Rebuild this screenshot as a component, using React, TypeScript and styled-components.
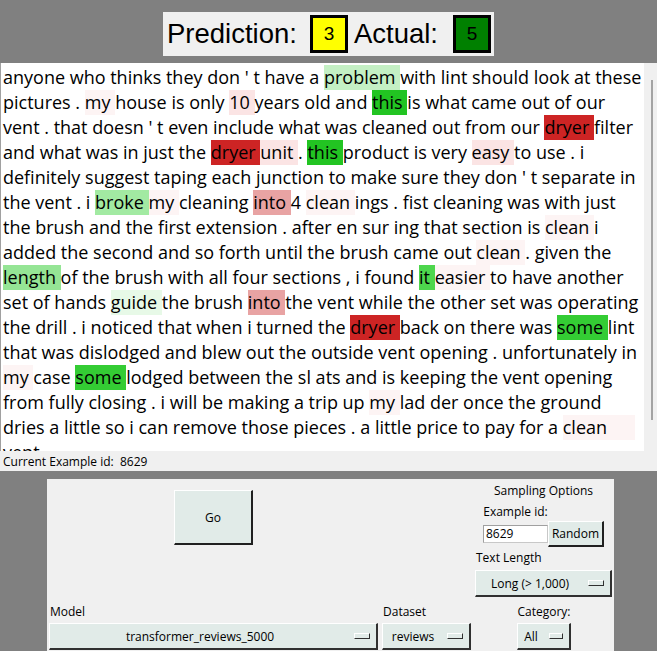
import React from "react";
import styled, { createGlobalStyle } from "styled-components";

const Global = createGlobalStyle`
  html, body { margin: 0; padding: 0; background: #808080; }
  body { width: 657px; height: 651px; overflow: hidden; }
  #root { width: 657px; }
`;

const Window = styled.div`
  display: flex;
  flex-direction: column;
  width: 657px;
  height: 651px;
  background: #808080;
  overflow: hidden;
`;

const HeaderBar = styled.div`
  height: 63px;
  display: flex;
  justify-content: center;
  align-items: flex-start;
  padding-top: 12px;
  box-sizing: border-box;
`;

const HeaderBox = styled.div`
  height: 44px;
  display: flex;
  align-items: center;
  background: #f0f0f0;
  padding: 0 3px 0 4px;
  font-family: "Liberation Sans", Arial, sans-serif;
  font-size: 27.5px;
  color: #000;
`;

const HeaderLabel = styled.span<{ $gap: number }>`
  margin-right: ${(p) => p.$gap}px;
  white-space: pre;
`;

const ScoreBox = styled.div<{ $bg: string; $mr: number }>`
  width: 38px;
  height: 38px;
  box-sizing: border-box;
  border: 3px solid #000;
  background: ${(p) => p.$bg};
  display: flex;
  align-items: center;
  justify-content: center;
  font-size: 19px;
  margin-right: ${(p) => p.$mr}px;
`;

const TextRow = styled.div`
  display: flex;
  height: 388px;
`;

const TextPane = styled.div`
  width: 644px;
  box-sizing: border-box;
  background: #fff;
  border-left: 1px solid #a0a0a0;
  padding: 2px 0 0 2px;
  overflow: hidden;
  font-family: "Open Sans", "Noto Sans", sans-serif;
  font-size: 18px;
  color: #000;
`;

const Line = styled.div`
  height: 25px;
  line-height: 25px;
  white-space: pre;
`;

const Mark = styled.span<{ $bg: string }>`
  display: inline-block;
  height: 25px;
  line-height: 25px;
  background: ${(p) => p.$bg};
`;

const ScrollTrack = styled.div`
  flex: 1;
  background: #f0f0f0;
  display: flex;
  justify-content: flex-end;
  padding: 17px 4px 31px 0;
`;

const Thumb = styled.div`
  width: 2px;
  background: #a3a3a3;
`;

const StatusBar = styled.div`
  height: 20px;
  background: #f0f0f0;
  padding-left: 3px;
  display: flex;
  align-items: center;
  font-family: "Open Sans", "Noto Sans", sans-serif;
  font-size: 12px;
  white-space: pre;
  color: #000;
`;

const BottomArea = styled.div`
  flex: 1;
  padding: 8px 0 0 47px;
  display: flex;
`;

const Panel = styled.div`
  width: 567px;
  background: #f0f0f0;
  box-sizing: border-box;
  padding-left: 2px;
  display: grid;
  grid-template-columns: 329px 89px 137px;
  grid-template-rows: 125px 19px auto;
  column-gap: 4px;
  font-family: "Open Sans", "Noto Sans", sans-serif;
  font-size: 12px;
  color: #000;
`;

const GoCell = styled.div`
  display: flex;
  justify-content: center;
  align-items: flex-start;
  padding-top: 11px;
`;

const RaisedButton = styled.button<{ $w: number; $h: number }>`
  width: ${(p) => p.$w}px;
  height: ${(p) => p.$h}px;
  box-sizing: border-box;
  background: #e1ebe8;
  border: 1px solid #fff;
  border-right: 2px solid #202020;
  border-bottom: 2px solid #202020;
  font-family: "Open Sans", "Noto Sans", sans-serif;
  font-size: 12px;
  color: #000;
  padding: 0;
  display: flex;
  align-items: center;
  justify-content: center;
`;

const SamplingCell = styled.div`
  display: flex;
  flex-direction: column;
  align-items: stretch;
`;

const CenterText = styled.div<{ $mt: number }>`
  text-align: center;
  height: 16px;
  line-height: 16px;
  margin-top: ${(p) => p.$mt}px;
`;

const IdGrid = styled.div`
  align-self: center;
  display: grid;
  grid-template-columns: 65px 56px;
  margin-top: 5px;
`;

const IdLabel = styled.div`
  text-align: center;
  height: 16px;
  line-height: 16px;
  margin-bottom: 1px;
`;

const Entry = styled.div`
  align-self: center;
  height: 18px;
  box-sizing: border-box;
  background: #fff;
  border: 1px solid #c8c8c8;
  border-top-color: #a0a0a0;
  border-left-color: #a0a0a0;
  padding-left: 2px;
  line-height: 16px;
`;

const FieldLabel = styled.div<{ $mt?: number }>`
  height: 16px;
  line-height: 16px;
  margin-top: ${(p) => p.$mt || 0}px;
  padding-left: 1px;
`;

const Menu = styled.div<{ $w?: number; $mt?: number }>`
  ${(p) => (p.$w ? `width: ${p.$w}px;` : "")}
  margin-top: ${(p) => p.$mt || 0}px;
  height: 27px;
  box-sizing: border-box;
  background: #e1ebe8;
  border: 1px solid #fff;
  border-right: 2px solid #303030;
  border-bottom: 2px solid #303030;
  display: flex;
  align-items: center;
`;

const MenuText = styled.span`
  flex: 1;
  text-align: center;
  white-space: nowrap;
`;

const Indicator = styled.span<{ $w?: number }>`
  width: ${(p) => p.$w || 16}px;
  height: 6px;
  box-sizing: border-box;
  background: #e1ebe8;
  border: 1px solid #fff;
  border-right: 1px solid #303030;
  border-bottom: 1px solid #303030;
  margin: 0 6px 0 4px;
`;

const LabelCell = styled.div<{ $align?: string }>`
  text-align: ${(p) => p.$align || "left"};
  line-height: 16px;
  padding-left: 1px;
`;

const MenuCell = styled.div<{ $center?: boolean }>`
  display: flex;
  justify-content: ${(p) => (p.$center ? "center" : "flex-start")};
  align-items: flex-start;
`;

const C: Record<string, string> = {
  g1: "#c4f0c4",
  G: "#22c422",
  R: "#cd2424",
  p1: "#fbe4e4",
  p0: "#fdf4f4",
  g2: "#a2eaa2",
  r2: "#e8a3a3",
  g3: "#95e595",
  g4: "#4dd64d",
  g5: "#e7f9e7",
  g6: "#34cc34",
};

type Seg = string | [string, string];

const lines: Seg[][] = [
  ["anyone who thinks they don ' t have a ", ["problem ", "g1"], "with lint should look at these"],
  ["pictures . ", ["my ", "p0"], "house is only ", ["10 ", "p1"], "years old and ", ["this ", "G"], "is what came out of our"],
  ["vent . that doesn ' t even include what was cleaned out from our ", ["dryer ", "R"], "filter"],
  ["and what was in just the ", ["dryer ", "R"], ["unit ", "p1"], ". ", ["this ", "G"], "product is very ", ["easy ", "p1"], "to use . i"],
  ["definitely suggest taping each junction to make sure they don ' t separate in"],
  ["the vent . i ", ["broke ", "g2"], ["my ", "p0"], "cleaning ", ["into ", "r2"], "4 ", ["clean ", "p0"], "ings . fist cleaning was with just"],
  ["the brush and the first extension . after en sur ing that section is ", ["clean ", "p0"], "i"],
  ["added the second and so forth until the brush came out ", ["clean ", "p0"], ". given the"],
  [["length ", "g3"], "of the brush with all four sections , i found ", ["it ", "g4"], ["easier ", "p0"], "to have another"],
  ["set of hands ", ["guide ", "g5"], "the brush ", ["into ", "r2"], "the vent while the other set was operating"],
  ["the drill . i noticed that when i turned the ", ["dryer ", "R"], "back on there was ", ["some ", "g6"], "lint"],
  ["that was dislodged and blew out the outside vent opening . unfortunately in"],
  [["my ", "p0"], "case ", ["some ", "g6"], "lodged between the sl ats and is keeping the vent opening"],
  ["from fully closing . i will be making a trip up ", ["my ", "p0"], "lad der once the ground"],
  ["dries a little so i can remove those pieces . a little price to pay for a ", ["clean      ", "p0"]],
  ["vent ."],
];

export default function App() {
  return (
    <Window>
      <Global />
      <HeaderBar>
        <HeaderBox>
          <HeaderLabel $gap={13}>Prediction:</HeaderLabel>
          <ScoreBox $bg="#ffff00" $mr={6}>3</ScoreBox>
          <HeaderLabel $gap={15}>Actual:</HeaderLabel>
          <ScoreBox $bg="#008000" $mr={0}>5</ScoreBox>
        </HeaderBox>
      </HeaderBar>
      <TextRow>
        <TextPane>
          {lines.map((segs, i) => (
            <Line key={i}>
              {segs.map((s, j) =>
                typeof s === "string" ? (
                  <React.Fragment key={j}>{s}</React.Fragment>
                ) : (
                  <Mark key={j} $bg={C[s[1]]}>
                    {s[0]}
                  </Mark>
                )
              )}
            </Line>
          ))}
        </TextPane>
        <ScrollTrack>
          <Thumb />
        </ScrollTrack>
      </TextRow>
      <StatusBar>Current Example id:  8629</StatusBar>
      <BottomArea>
        <Panel>
          <GoCell>
            <RaisedButton $w={79} $h={55}>Go</RaisedButton>
          </GoCell>
          <div />
          <SamplingCell>
            <CenterText $mt={4}>Sampling Options</CenterText>
            <IdGrid>
              <IdLabel>Example id:</IdLabel>
              <div />
              <Entry>8629</Entry>
              <RaisedButton $w={56} $h={26}>Random</RaisedButton>
            </IdGrid>
            <FieldLabel $mt={3}>Text Length</FieldLabel>
            <Menu $mt={4}>
              <MenuText>Long (&gt; 1,000)</MenuText>
              <Indicator />
            </Menu>
          </SamplingCell>
          <LabelCell>Model</LabelCell>
          <LabelCell>Dataset</LabelCell>
          <LabelCell $align="center">Category:</LabelCell>
          <MenuCell>
            <Menu $w={329}>
              <MenuText>transformer_reviews_5000</MenuText>
              <Indicator />
            </Menu>
          </MenuCell>
          <MenuCell>
            <Menu $w={89}>
              <MenuText>reviews</MenuText>
              <Indicator />
            </Menu>
          </MenuCell>
          <MenuCell $center>
            <Menu $w={54}>
              <MenuText>All</MenuText>
              <Indicator $w={14} />
            </Menu>
          </MenuCell>
        </Panel>
      </BottomArea>
    </Window>
  );
}
